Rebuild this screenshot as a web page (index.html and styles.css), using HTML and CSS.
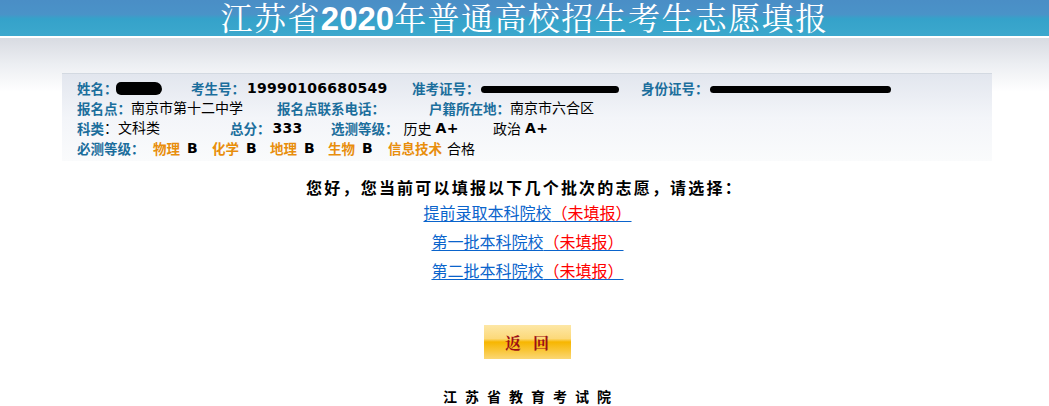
FILE: index.html
```html
<!DOCTYPE html>
<html lang="zh-CN">
<head>
<meta charset="utf-8">
<title>江苏省2020年普通高校招生考生志愿填报</title>
<link rel="stylesheet" href="styles.css">
</head>
<body>
<div class="header">
  <h1 class="title">江苏省<b class="yr">2020</b>年普通高校招生考生志愿填报</h1>
</div>
<div class="page">
  <div class="info">
    <div class="row">
      <span class="c w114"><span class="lb">姓名：</span><span class="blob b1"></span></span>
      <span class="c w221"><span class="lb">考生号：</span><span class="num">19990106680549</span></span>
      <span class="c w229"><span class="lb">准考证号：</span><span class="blob b2"></span></span>
      <span class="c"><span class="lb">身份证号：</span><span class="blob b3"></span></span>
    </div>
    <div class="row">
      <span class="c w200"><span class="lb">报名点：</span>南京市第十二中学</span>
      <span class="c w152"><span class="lb">报名点联系电话：</span></span>
      <span class="c"><span class="lb">户籍所在地：</span>南京市六合区</span>
    </div>
    <div class="row">
      <span class="c w153"><span class="lb">科类</span>：文科类</span>
      <span class="c w101"><span class="lb">总分：</span><span class="num">333</span></span>
      <span class="c w157"><span class="lb">选测等级：</span><span class="val">历史</span><span class="num sp">A+</span></span>
      <span class="c"><span class="val">政治</span><span class="num sp">A+</span></span>
    </div>
    <div class="row">
      <span class="c w76"><span class="lb">必测等级：</span></span>
      <span class="c w59"><span class="sub">物理</span><span class="num">B</span></span>
      <span class="c w58"><span class="sub">化学</span><span class="num">B</span></span>
      <span class="c w58"><span class="sub">地理</span><span class="num">B</span></span>
      <span class="c w60"><span class="sub">生物</span><span class="num">B</span></span>
      <span class="c"><span class="sub">信息技术</span><span class="val">合格</span></span>
    </div>
  </div>

  <div class="choose">
    <p class="prompt">您好，您当前可以填报以下几个批次的志愿，请选择：</p>
    <a class="batch" href="#">提前录取本科院校<span class="st">（未填报）</span></a>
    <a class="batch" href="#">第一批本科院校<span class="st">（未填报）</span></a>
    <a class="batch" href="#">第二批本科院校<span class="st">（未填报）</span></a>
  </div>

  <div class="actions">
    <button class="back" type="button">返回</button>
  </div>

  <div class="footer">江苏省教育考试院</div>
</div>
</body>
</html>
```
FILE: styles.css
```css
html, body {
  margin: 0;
  padding: 0;
}
body {
  background: #fff linear-gradient(#ffffff 0, #ffffff 38px, #d8dbe2 38px, #eceef2 64px, #ffffff 92px) no-repeat;
  font-family: "DejaVu Sans", "Noto Sans CJK SC", sans-serif;
  font-size: 14px;
  color: #000;
}
.header {
  height: 36px;
  background: linear-gradient(#4a8ec6 0, #4a93c8 40%, #35a2ca 52%, #3ca8cd 100%);
  border-bottom: 2px solid #ffffff;
  text-align: center;
}
.title {
  margin: 0;
  font-family: "Noto Serif CJK SC", "Noto Sans CJK SC", sans-serif;
  font-weight: normal;
  font-size: 32px;
  line-height: 33px;
  height: 36px;
  color: #fff;
  letter-spacing: 1.4px;
}
.yr {
  font-family: "Liberation Sans", "DejaVu Sans", sans-serif;
  font-weight: bold;
  font-size: 33px;
  letter-spacing: 0;
}
.page {
  padding-top: 35px;
}
.info {
  margin-left: 62px;
  width: 915px;
  padding: 4px 0 3px 15px;
  border-top: 1px solid #d3d9e1;
  background: linear-gradient(#e2e6ee, #f3f5f9 50%, #fafbfc);
}
.row {
  display: flex;
  height: 20px;
  line-height: 20px;
  white-space: nowrap;
}
.c { flex: none; display: flex; align-items: center; }
.w114 { width: 114px; }
.w221 { width: 221px; }
.w229 { width: 229px; }
.w200 { width: 200px; }
.w152 { width: 152px; }
.w153 { width: 153px; }
.w101 { width: 101px; }
.w157 { width: 157px; }
.w76 { width: 76px; }
.w59 { width: 59px; }
.w58 { width: 58px; }
.w60 { width: 60px; }
.lb {
  color: #1b6e9c;
  font-weight: bold;
  font-family: "Noto Sans CJK SC", sans-serif;
  font-size: 13.5px;
}
.val {
  font-family: "Noto Sans CJK SC", sans-serif;
  margin-left: 5px;
}
.num {
  font-weight: bold;
  font-family: "DejaVu Sans", sans-serif;
  letter-spacing: 0.3px;
  margin-left: 2px;
}
.sp { margin-left: 4px; }
.sub {
  color: #e88e0c;
  font-weight: bold;
  font-family: "Noto Sans CJK SC", sans-serif;
  font-size: 13.5px;
  margin-right: 5px;
}
.sub + .val { margin-left: 0; }
.blob {
  display: inline-block;
  background: #000;
  border-radius: 6px;
}
.b1 { width: 46px; height: 13px; margin-left: -2px; border-radius: 5px 7px 6px 5px; }
.b2 { width: 138px; height: 7px; margin-left: 1px; margin-top: 2px; border-radius: 4px; }
.b3 { width: 181px; height: 7px; margin-left: 1px; margin-top: 2px; border-radius: 4px; }

.choose {
  text-align: center;
  padding-top: 16px;
}
.prompt {
  margin: 0 0 1px;
  font-family: "Noto Sans CJK SC", sans-serif;
  font-weight: bold;
  font-size: 16px;
  line-height: 20px;
  letter-spacing: 2.2px;
  padding-left: 0;
}
.batch {
  display: block;
  width: max-content;
  margin: 0 auto;
  font-family: "Noto Sans CJK SC", sans-serif;
  font-size: 16px;
  line-height: 29px;
  color: #0a64cc;
  text-decoration: underline;
  text-underline-offset: 2px;
  position: relative;
  left: 3px;
}
.st { color: #ff0000; }

.actions {
  text-align: center;
  padding-top: 40px;
}
.back {
  width: 87px;
  height: 34px;
  border: 0;
  margin: 0 0 0 5px;
  padding: 0 0 0 12px;
  background: linear-gradient(#fde7a6 0, #fcd97a 40%, #f7b600 50%, #f9c638 75%, #fbd774 100%);
  color: #9c0f16;
  font-family: "Noto Serif CJK SC", "Noto Sans CJK SC", serif;
  font-weight: bold;
  font-size: 16px;
  letter-spacing: 12px;
  cursor: pointer;
}
.footer {
  text-align: center;
  padding-top: 27px;
  padding-left: 13px;
  font-family: "Noto Sans CJK SC", sans-serif;
  font-weight: bold;
  font-size: 14px;
  line-height: 20px;
  letter-spacing: 8px;
}
```
